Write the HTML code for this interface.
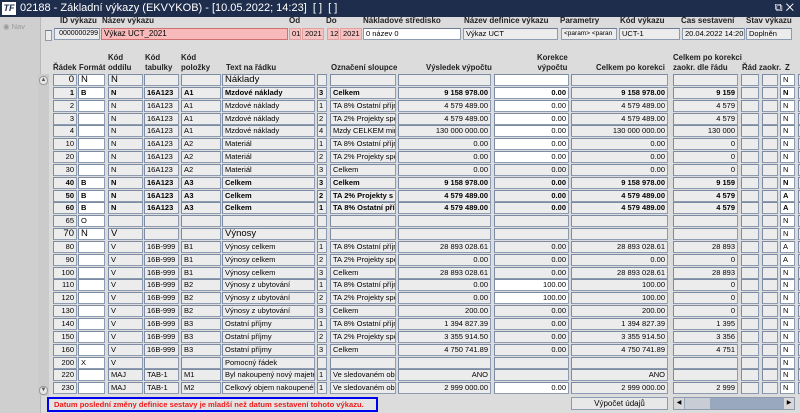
<!DOCTYPE html>
<html><head><meta charset="utf-8"><style>
*{margin:0;padding:0;box-sizing:border-box}
body{width:800px;height:413px;overflow:hidden;background:#dcdcdc;font-family:"Liberation Sans",sans-serif;font-size:7.5px;color:#000;position:relative}
.a{position:absolute}
.tb{left:0;top:0;width:800px;height:17px;background:#1f2d4d;color:#fff;font-size:11px;line-height:17px;padding-left:20px}
.nav{left:0;top:17px;width:41px;height:396px;background:#cfcfcf;border-right:1px solid #b8b8b8}
.lb{font-weight:bold;font-size:8px;color:#222}
.f{height:12px;border:1px solid #8d9bb0;border-top-color:#6d7b94;background:#ececec;font-size:7.5px;line-height:10px;padding:0 2px;white-space:nowrap;overflow:hidden}
.r{position:absolute;left:0;height:12px;width:800px}
.r span{position:absolute;top:0;height:12px;border:1px solid #8d9bb0;border-left-color:#7d8ba2;border-top-color:#7d8ba2;background:#ececec;line-height:10px;padding:0 2px;white-space:nowrap;overflow:hidden}
.r span:nth-child(1){left:53px;width:24px;text-align:right}
.r span:nth-child(2){left:78px;width:27px;background:#fff}
.r span:nth-child(3){left:108px;width:35px}
.r span:nth-child(4){left:144px;width:35px}
.r span:nth-child(5){left:181px;width:40px}
.r span:nth-child(6){left:222px;width:93px}
.r span:nth-child(7){left:317px;width:10px;padding:0 1px}
.r span:nth-child(8){left:330px;width:66px}
.r span:nth-child(9){left:398px;width:93px;text-align:right}
.r span:nth-child(10){left:494px;width:75px;text-align:right}
.r span:nth-child(11){left:571px;width:97px;text-align:right}
.r span:nth-child(12){left:673px;width:65px;text-align:right}
.r span:nth-child(13){left:741px;width:18px}
.r span:nth-child(14){left:762px;width:16px}
.r span:nth-child(15){left:780px;width:15px;background:#fff}
.r span:nth-child(16){left:798px;width:4px}
.w span:nth-child(10){background:#fff}
.b{font-weight:bold}
.big span:nth-child(6),.big span:nth-child(1),.big span:nth-child(2),.big span:nth-child(3){font-size:9.5px}
.hd{font-weight:bold;font-size:7.8px;color:#222;line-height:10px}
</style></head><body>
<div class="a tb"><span style="position:absolute;left:2px;top:2px;width:14px;height:13px;background:#fff;color:#1f2d4d;font-size:9px;line-height:13px;text-align:center;font-weight:bold;font-style:italic">TF</span>02188 - Základní výkazy (EKVYKOB) - [10.05.2022; 14:23]&nbsp; [ ]&nbsp; [ ]<span style="position:absolute;right:6px;top:0;font-size:11px">⧉ ✕</span></div>
<div class="a nav"><div style="position:absolute;left:3px;top:5px;font-size:7.5px;color:#999">◉ Nav</div></div>
<div class="a" style="left:38px;top:74px;width:11px;height:322px;background:#cbcbcb"></div>
<div class="a" style="left:39px;top:76px;width:9px;height:9px;border:1px solid #999;border-radius:4px;background:#e6e6e6;font-size:6px;line-height:7px;text-align:center;color:#555">▲</div>
<div class="a" style="left:39px;top:386px;width:9px;height:9px;border:1px solid #999;border-radius:4px;background:#e6e6e6;font-size:6px;line-height:7px;text-align:center;color:#555">▼</div>

<div class="a lb" style="left:60px;top:16px">ID výkazu</div>
<div class="a lb" style="left:102px;top:16px">Název výkazu</div>
<div class="a lb" style="left:289px;top:16px">Od</div>
<div class="a lb" style="left:326px;top:16px">Do</div>
<div class="a lb" style="left:363px;top:16px">Nákladové středisko</div>
<div class="a lb" style="left:464px;top:16px">Název definice výkazu</div>
<div class="a lb" style="left:560px;top:16px">Parametry</div>
<div class="a lb" style="left:620px;top:16px">Kód výkazu</div>
<div class="a lb" style="left:681px;top:16px">Čas sestavení</div>
<div class="a lb" style="left:746px;top:16px">Stav výkazu</div>
<div class="a f" style="left:45px;top:30px;width:7px;height:11px"></div>
<div class="a f" style="left:54px;top:28px;width:46px;text-align:right;font-size:7px;padding:0 1px">0000000299</div>
<div class="a f" style="left:101px;top:28px;width:187px;background:#f7b9b9;border-color:#d07070;font-size:8px">Výkaz UCT_2021</div>
<div class="a f" style="left:289px;top:28px;width:12px;background:#f7c2c2;border-color:#e0a0a0">01</div>
<div class="a f" style="left:302px;top:28px;width:22px;background:#f7c2c2;border-color:#e0a0a0">2021</div>
<div class="a f" style="left:327px;top:28px;width:12px;background:#f7c2c2;border-color:#e0a0a0">12</div>
<div class="a f" style="left:340px;top:28px;width:22px;background:#f7c2c2;border-color:#e0a0a0">2021</div>
<div class="a f" style="left:363px;top:28px;width:98px;background:#fff">0 název 0</div>
<div class="a f" style="left:463px;top:28px;width:95px">Výkaz UCT</div>
<div class="a f" style="left:561px;top:28px;width:56px;font-size:6.5px">&lt;param&gt; &lt;paran</div>
<div class="a f" style="left:619px;top:28px;width:61px">UCT-1</div>
<div class="a f" style="left:682px;top:28px;width:63px">20.04.2022 14:20:2</div>
<div class="a f" style="left:746px;top:28px;width:46px">Doplněn</div>

<div class="a hd" style="left:53px;top:63px">Řádek</div>
<div class="a hd" style="left:79px;top:63px">Formát</div>
<div class="a hd" style="left:108px;top:53px">Kód<br>oddílu</div>
<div class="a hd" style="left:145px;top:53px">Kód<br>tabulky</div>
<div class="a hd" style="left:181px;top:53px">Kód<br>položky</div>
<div class="a hd" style="left:226px;top:63px">Text na řádku</div>
<div class="a hd" style="left:331px;top:63px">Označení sloupce</div>
<div class="a hd" style="left:426px;top:63px">Výsledek výpočtu</div>
<div class="a hd" style="left:537px;top:53px;text-align:center">Korekce<br>výpočtu</div>
<div class="a hd" style="left:596px;top:63px">Celkem po korekci</div>
<div class="a hd" style="left:673px;top:53px">Celkem po korekci<br>zaokr. dle řádu</div>
<div class="a hd" style="left:742px;top:63px">Řád zaokr.</div>
<div class="a hd" style="left:785px;top:63px">Z</div>

<div class="r w big" style="top:74px"><span>0</span><span>N</span><span>N</span><span></span><span></span><span>Náklady</span><span></span><span></span><span></span><span></span><span></span><span></span><span></span><span></span><span>N</span><span></span></div>
<div class="r w b" style="top:87px"><span>1</span><span>B</span><span>N</span><span>16A123</span><span>A1</span><span>Mzdové náklady</span><span>3</span><span>Celkem</span><span>9 158 978.00</span><span>0.00</span><span>9 158 978.00</span><span>9 159</span><span></span><span></span><span>N</span><span></span></div>
<div class="r w" style="top:100px"><span>2</span><span></span><span>N</span><span>16A123</span><span>A1</span><span>Mzdové náklady</span><span>1</span><span>TA 8% Ostatní příjm</span><span>4 579 489.00</span><span>0.00</span><span>4 579 489.00</span><span>4 579</span><span></span><span></span><span>N</span><span></span></div>
<div class="r w" style="top:113px"><span>3</span><span></span><span>N</span><span>16A123</span><span>A1</span><span>Mzdové náklady</span><span>2</span><span>TA 2% Projekty spo</span><span>4 579 489.00</span><span>0.00</span><span>4 579 489.00</span><span>4 579</span><span></span><span></span><span>N</span><span></span></div>
<div class="r w" style="top:125px"><span>4</span><span></span><span>N</span><span>16A123</span><span>A1</span><span>Mzdové náklady</span><span>4</span><span>Mzdy CELKEM minu</span><span>130 000 000.00</span><span>0.00</span><span>130 000 000.00</span><span>130 000</span><span></span><span></span><span>N</span><span></span></div>
<div class="r w" style="top:138px"><span>10</span><span></span><span>N</span><span>16A123</span><span>A2</span><span>Materiál</span><span>1</span><span>TA 8% Ostatní příjm</span><span>0.00</span><span>0.00</span><span>0.00</span><span>0</span><span></span><span></span><span>N</span><span></span></div>
<div class="r w" style="top:151px"><span>20</span><span></span><span>N</span><span>16A123</span><span>A2</span><span>Materiál</span><span>2</span><span>TA 2% Projekty spo</span><span>0.00</span><span>0.00</span><span>0.00</span><span>0</span><span></span><span></span><span>N</span><span></span></div>
<div class="r" style="top:164px"><span>30</span><span></span><span>N</span><span>16A123</span><span>A2</span><span>Materiál</span><span>3</span><span>Celkem</span><span>0.00</span><span>0.00</span><span>0.00</span><span>0</span><span></span><span></span><span>N</span><span></span></div>
<div class="r b" style="top:177px"><span>40</span><span>B</span><span>N</span><span>16A123</span><span>A3</span><span>Celkem</span><span>3</span><span>Celkem</span><span>9 158 978.00</span><span>0.00</span><span>9 158 978.00</span><span>9 159</span><span></span><span></span><span>N</span><span></span></div>
<div class="r b" style="top:190px"><span>50</span><span>B</span><span>N</span><span>16A123</span><span>A3</span><span>Celkem</span><span>2</span><span>TA 2% Projekty s</span><span>4 579 489.00</span><span>0.00</span><span>4 579 489.00</span><span>4 579</span><span></span><span></span><span>A</span><span></span></div>
<div class="r b" style="top:202px"><span>60</span><span>B</span><span>N</span><span>16A123</span><span>A3</span><span>Celkem</span><span>1</span><span>TA 8% Ostatní pří</span><span>4 579 489.00</span><span>0.00</span><span>4 579 489.00</span><span>4 579</span><span></span><span></span><span>A</span><span></span></div>
<div class="r" style="top:215px"><span>65</span><span>O</span><span></span><span></span><span></span><span></span><span></span><span></span><span></span><span></span><span></span><span></span><span></span><span></span><span>N</span><span></span></div>
<div class="r big" style="top:228px"><span>70</span><span>N</span><span>V</span><span></span><span></span><span>Výnosy</span><span></span><span></span><span></span><span></span><span></span><span></span><span></span><span></span><span>N</span><span></span></div>
<div class="r" style="top:241px"><span>80</span><span></span><span>V</span><span>16B-999</span><span>B1</span><span>Výnosy celkem</span><span>1</span><span>TA 8% Ostatní příjm</span><span>28 893 028.61</span><span>0.00</span><span>28 893 028.61</span><span>28 893</span><span></span><span></span><span>A</span><span></span></div>
<div class="r" style="top:254px"><span>90</span><span></span><span>V</span><span>16B-999</span><span>B1</span><span>Výnosy celkem</span><span>2</span><span>TA 2% Projekty spo</span><span>0.00</span><span>0.00</span><span>0.00</span><span>0</span><span></span><span></span><span>A</span><span></span></div>
<div class="r" style="top:267px"><span>100</span><span></span><span>V</span><span>16B-999</span><span>B1</span><span>Výnosy celkem</span><span>3</span><span>Celkem</span><span>28 893 028.61</span><span>0.00</span><span>28 893 028.61</span><span>28 893</span><span></span><span></span><span>N</span><span></span></div>
<div class="r w" style="top:279px"><span>110</span><span></span><span>V</span><span>16B-999</span><span>B2</span><span>Výnosy z ubytování</span><span>1</span><span>TA 8% Ostatní příjm</span><span>0.00</span><span>100.00</span><span>100.00</span><span>0</span><span></span><span></span><span>N</span><span></span></div>
<div class="r w" style="top:292px"><span>120</span><span></span><span>V</span><span>16B-999</span><span>B2</span><span>Výnosy z ubytování</span><span>2</span><span>TA 2% Projekty spo</span><span>0.00</span><span>100.00</span><span>100.00</span><span>0</span><span></span><span></span><span>N</span><span></span></div>
<div class="r" style="top:305px"><span>130</span><span></span><span>V</span><span>16B-999</span><span>B2</span><span>Výnosy z ubytování</span><span>3</span><span>Celkem</span><span>200.00</span><span>0.00</span><span>200.00</span><span>0</span><span></span><span></span><span>N</span><span></span></div>
<div class="r" style="top:318px"><span>140</span><span></span><span>V</span><span>16B-999</span><span>B3</span><span>Ostatní příjmy</span><span>1</span><span>TA 8% Ostatní příjm</span><span>1 394 827.39</span><span>0.00</span><span>1 394 827.39</span><span>1 395</span><span></span><span></span><span>N</span><span></span></div>
<div class="r" style="top:331px"><span>150</span><span></span><span>V</span><span>16B-999</span><span>B3</span><span>Ostatní příjmy</span><span>2</span><span>TA 2% Projekty spo</span><span>3 355 914.50</span><span>0.00</span><span>3 355 914.50</span><span>3 356</span><span></span><span></span><span>N</span><span></span></div>
<div class="r" style="top:344px"><span>160</span><span></span><span>V</span><span>16B-999</span><span>B3</span><span>Ostatní příjmy</span><span>3</span><span>Celkem</span><span>4 750 741.89</span><span>0.00</span><span>4 750 741.89</span><span>4 751</span><span></span><span></span><span>N</span><span></span></div>
<div class="r" style="top:357px"><span>200</span><span>X</span><span>V</span><span></span><span></span><span>Pomocný řádek</span><span></span><span></span><span></span><span></span><span></span><span></span><span></span><span></span><span>N</span><span></span></div>
<div class="r" style="top:369px"><span>220</span><span></span><span>MAJ</span><span>TAB-1</span><span>M1</span><span>Byl nakoupený nový majetek</span><span>1</span><span>Ve sledovaném obd</span><span>ANO</span><span></span><span>ANO</span><span></span><span></span><span></span><span>N</span><span></span></div>
<div class="r w" style="top:382px"><span>230</span><span></span><span>MAJ</span><span>TAB-1</span><span>M2</span><span>Celkový objem nakoupeného</span><span>1</span><span>Ve sledovaném obd</span><span>2 999 000.00</span><span>0.00</span><span>2 999 000.00</span><span>2 999</span><span></span><span></span><span>N</span><span></span></div>

<div class="a" style="left:47px;top:397px;width:331px;height:15px;border:2px solid #0000f0;color:#f01818;font-weight:bold;font-size:7.6px;line-height:11px;padding-left:5px;background:#e4e4e4;white-space:nowrap;overflow:hidden">Datum poslední změny definice sestavy je mladší než datum sestavení tohoto výkazu.</div>
<div class="a" style="left:571px;top:397px;width:97px;height:13px;border:1px solid #8d9bb0;background:#e8e8e8;text-align:center;line-height:11px;font-size:8px">Výpočet údajů</div>
<div class="a" style="left:673px;top:397px;width:122px;height:13px;border:1px solid #8d9bb0;background:#9aa8bf"><div style="position:absolute;left:0;top:0;width:10px;height:11px;background:#d8d8d8;font-size:6px;line-height:11px;text-align:center">◀</div><div style="position:absolute;left:11px;top:0;width:25px;height:11px;background:#c8ccd4"></div><div style="position:absolute;right:0;top:0;width:10px;height:11px;background:#d8d8d8;font-size:6px;line-height:11px;text-align:center">▶</div></div>
</body></html>
